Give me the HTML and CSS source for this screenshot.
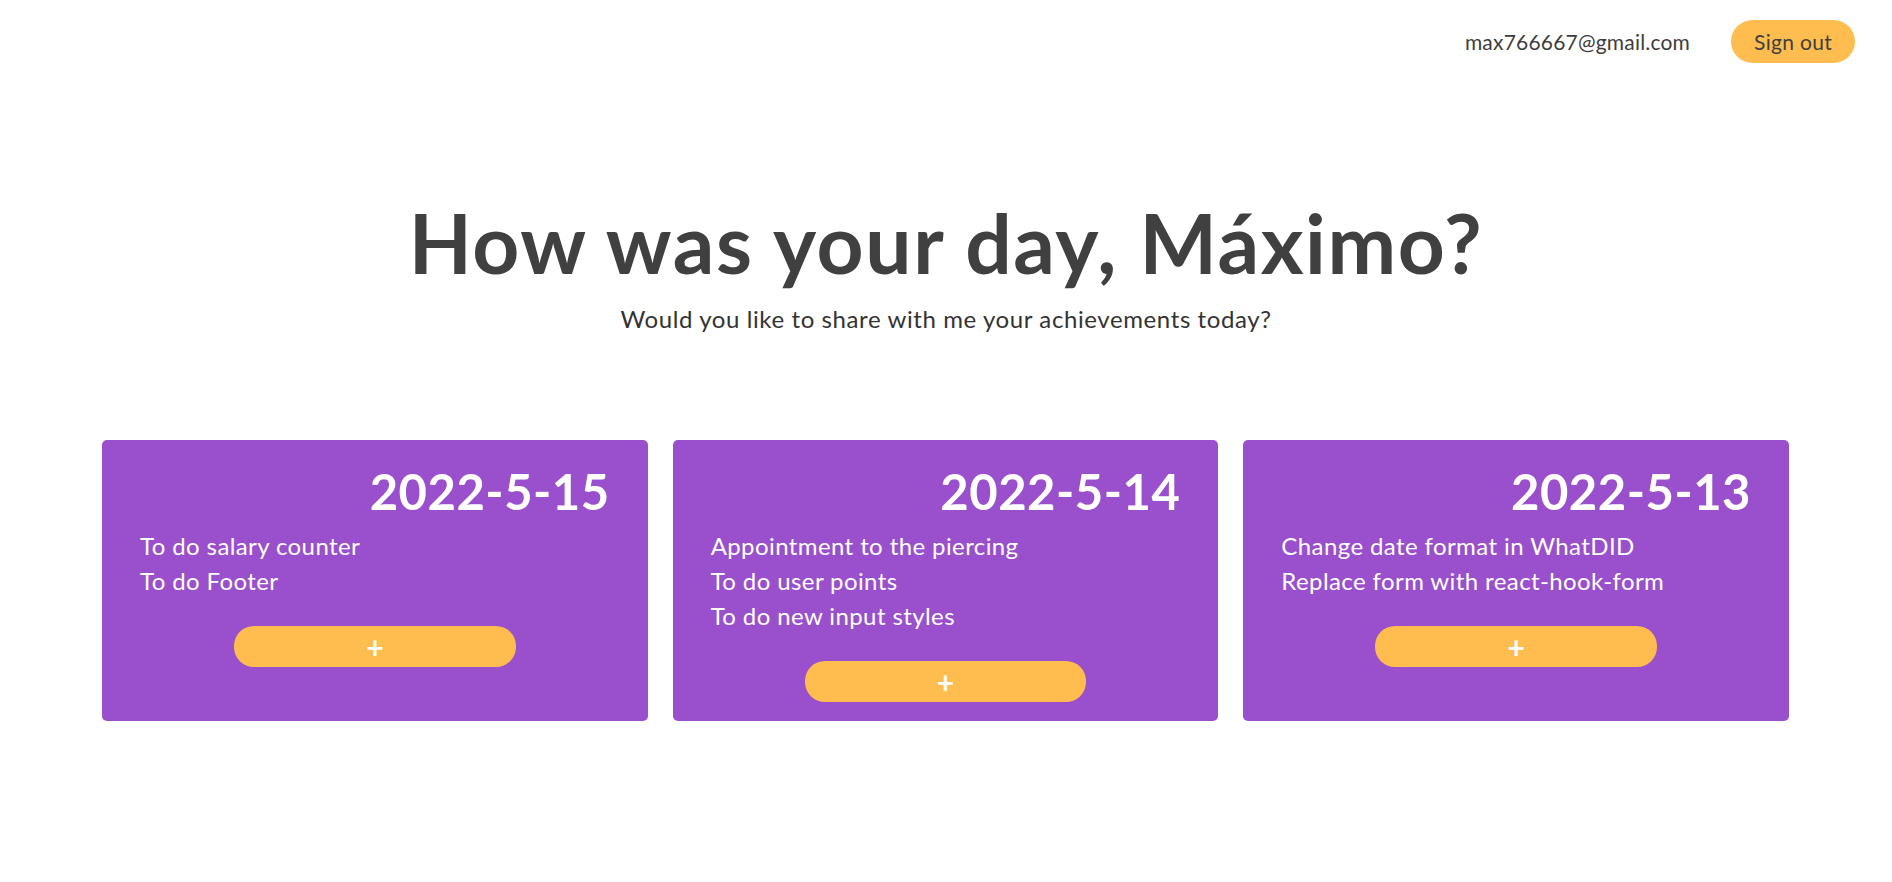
FILE: index.html
```html
<!DOCTYPE html>
<html lang="en">
<head>
<meta charset="utf-8">
<title>WhatDID</title>
<link rel="stylesheet" href="styles.css">
</head>
<body>
<header class="topbar">
  <span class="email">max766667@gmail.com</span>
  <button class="signout">Sign out</button>
</header>
<main>
  <section class="hero">
    <h1 class="title">How was your day, Máximo?</h1>
    <p class="subtitle">Would you like to share with me your achievements today?</p>
  </section>
  <section class="cards">
    <article class="card">
      <h2 class="date">2022-5-15</h2>
      <ul class="items">
        <li>To do salary counter</li>
        <li>To do Footer</li>
      </ul>
      <button class="add">+</button>
    </article>
    <article class="card">
      <h2 class="date">2022-5-14</h2>
      <ul class="items">
        <li>Appointment to the piercing</li>
        <li>To do user points</li>
        <li>To do new input styles</li>
      </ul>
      <button class="add">+</button>
    </article>
    <article class="card">
      <h2 class="date">2022-5-13</h2>
      <ul class="items">
        <li>Change date format in WhatDID</li>
        <li>Replace form with react-hook-form</li>
      </ul>
      <button class="add">+</button>
    </article>
  </section>
</main>
</body>
</html>
```
FILE: styles.css
```css
* { box-sizing: border-box; }

body {
  margin: 0;
  font-family: "Lato", "Noto Sans", sans-serif;
  color: #404040;
  background: #ffffff;
}

.topbar {
  display: flex;
  justify-content: flex-end;
  align-items: center;
  gap: 41px;
  padding: 20px 37px 0 0;
}

.email {
  font-size: 21px;
  color: #3d3d3d;
  letter-spacing: 0.2px;
}

.signout {
  height: 43px;
  padding: 0 23px;
  border: none;
  border-radius: 22px;
  background: #ffbd4f;
  color: #404040;
  font-family: inherit;
  font-size: 21px;
  letter-spacing: 0.3px;
}

.hero {
  text-align: center;
  margin-top: 131px;
}

.title {
  margin: 0;
  font-size: 82px;
  line-height: 96px;
  font-weight: 700;
  letter-spacing: 1.6px;
  color: #404040;
}

.subtitle {
  margin: 16px 0 0;
  font-size: 24px;
  line-height: 26px;
  letter-spacing: 0.6px;
  color: #333333;
}

.cards {
  display: flex;
  gap: 25px;
  padding: 0 103px 0 102px;
  margin-top: 108px;
}

.card {
  flex: 1;
  background: #9a50cc;
  border-radius: 5px;
  padding: 22px 38px 19px;
  color: #ffffff;
  display: flex;
  flex-direction: column;
}

.date {
  margin: 0;
  text-align: right;
  font-size: 49px;
  line-height: 58px;
  letter-spacing: 0.5px;
  font-weight: 700;
}

.items {
  list-style: none;
  margin: 8px 0 0;
  padding: 0;
  font-size: 24px;
  line-height: 35px;
  letter-spacing: 0.4px;
}

.add {
  align-self: center;
  width: 60%;
  height: 41px;
  margin-top: 28px;
  border: none;
  border-radius: 20px;
  background: #ffbd4f;
  color: #ffffff;
  font-family: inherit;
  font-size: 30px;
  font-weight: 700;
  line-height: 1;
  padding: 0;
}
```
